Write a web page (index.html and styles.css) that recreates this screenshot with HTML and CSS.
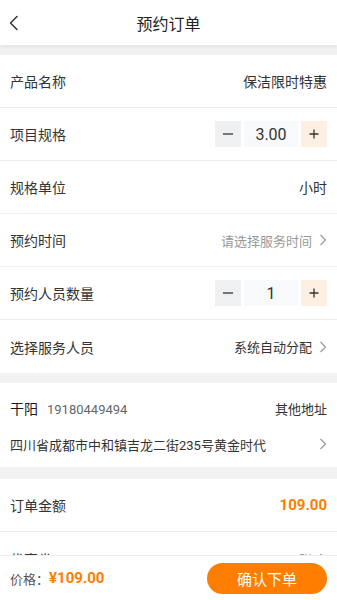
FILE: index.html
```html
<!DOCTYPE html>
<html lang="zh">
<head>
<meta charset="utf-8">
<link rel="stylesheet" href="styles.css">
</head>
<body>
<div class="page">
  <header class="topbar">
    <svg class="back" width="12" height="16" viewBox="0 0 12 16"><path d="M9 1.5 L2.5 8 L9 14.5" fill="none" stroke="#333" stroke-width="1.5" stroke-linecap="round" stroke-linejoin="round"/></svg>
    <h1 class="title">预约订单</h1>
  </header>

  <section class="card">
    <div class="row"><span class="label">产品名称</span><span class="value">保洁限时特惠</span></div>
    <div class="row"><span class="label">项目规格</span>
      <div class="stepper">
        <span class="btn minus"><svg width="12" height="12" viewBox="0 0 12 12"><path d="M1 6 H11" stroke="#333" stroke-width="1.3"/></svg></span>
        <span class="num">3.00</span>
        <span class="btn plus"><svg width="12" height="12" viewBox="0 0 12 12"><path d="M1.5 6 H10.5 M6 1.5 V10.5" stroke="#333" stroke-width="1.3"/></svg></span>
      </div>
    </div>
    <div class="row"><span class="label">规格单位</span><span class="value">小时</span></div>
    <div class="row"><span class="label">预约时间</span><span class="value small muted">请选择服务时间<svg class="chev" width="8" height="12" viewBox="0 0 8 12"><path d="M1.5 1 L6.5 6 L1.5 11" fill="none" stroke="#9a9a9a" stroke-width="1.2"/></svg></span></div>
    <div class="row"><span class="label">预约人员数量</span>
      <div class="stepper">
        <span class="btn minus"><svg width="12" height="12" viewBox="0 0 12 12"><path d="M1 6 H11" stroke="#333" stroke-width="1.3"/></svg></span>
        <span class="num">1</span>
        <span class="btn plus"><svg width="12" height="12" viewBox="0 0 12 12"><path d="M1.5 6 H10.5 M6 1.5 V10.5" stroke="#333" stroke-width="1.3"/></svg></span>
      </div>
    </div>
    <div class="row"><span class="label">选择服务人员</span><span class="value small">系统自动分配<svg class="chev" width="8" height="12" viewBox="0 0 8 12"><path d="M1.5 1 L6.5 6 L1.5 11" fill="none" stroke="#9a9a9a" stroke-width="1.2"/></svg></span></div>
  </section>

  <section class="card address">
    <div class="addr-top">
      <span class="who"><span class="name">干阳</span><span class="phone">19180449494</span></span>
      <span class="value small">其他地址</span>
    </div>
    <div class="addr-line">
      <span class="addr">四川省成都市中和镇吉龙二街235号黄金时代</span>
      <svg class="chev" width="8" height="12" viewBox="0 0 8 12"><path d="M1.5 1 L6.5 6 L1.5 11" fill="none" stroke="#9a9a9a" stroke-width="1.2"/></svg>
    </div>
  </section>

  <section class="card">
    <div class="row"><span class="label">订单金额</span><span class="value amount">109.00</span></div>
    <div class="row"><span class="label">优惠卷</span><span class="value small muted">-0张<svg class="chev" width="8" height="12" viewBox="0 0 8 12"><path d="M1.5 1 L6.5 6 L1.5 11" fill="none" stroke="#9a9a9a" stroke-width="1.2"/></svg></span></div>
  </section>
</div>

<footer class="bottombar">
  <div class="price"><span class="price-label">价格：</span><span class="price-num">¥109.00</span></div>
  <button class="submit">确认下单</button>
</footer>
</body>
</html>
```

FILE: styles.css
```css
* { box-sizing: border-box; margin: 0; padding: 0; }
html, body { background: #f2f2f2; }
body {
  font-family: Roboto, "Noto Sans CJK SC", sans-serif;
  color: #333;
  font-size: 14px;
  width: 337px;
  height: 600px;
  overflow: hidden;
}
.page { display: flex; flex-direction: column; }
.topbar {
  height: 45px;
  background: #fff;
  display: flex;
  align-items: center;
  justify-content: center;
  position: relative;
  margin-bottom: 10px;
  box-shadow: 0 2px 4px rgba(0,0,0,0.06);
}
.back { position: absolute; left: 8px; top: 15px; }
.title { font-size: 16px; font-weight: normal; color: #222; }
.card { background: #fff; margin-bottom: 10px; }
.row {
  height: 53px;
  padding: 0 10px;
  display: flex;
  align-items: center;
  justify-content: space-between;
  border-bottom: 1px solid #eeeeee;
}
.row:last-child { border-bottom: none; }
.label { font-size: 14px; color: #333; }
.value { font-size: 14px; color: #333; display: flex; align-items: center; }
.value.small { font-size: 13px; }
.value.muted { color: #999; }
.chev { margin-left: 7px; margin-right: 0; }
.stepper { display: flex; gap: 3px; align-items: center; }
.btn, .num {
  height: 26px;
  display: flex;
  align-items: center;
  justify-content: center;
}
.btn { width: 26px; }
.minus { background: #eef0f2; }
.plus { background: #fdf0e3; }
.num { width: 54px; background: #f8f9fa; font-size: 16px; color: #333; }
.address { padding: 14px 10px 12px; margin-bottom: 12px; }
.addr-top, .addr-line {
  height: 22px;
  display: flex;
  align-items: center;
  justify-content: space-between;
}
.addr-line { margin-top: 14px; }
.who { display: flex; align-items: baseline; }
.name { font-size: 14px; color: #1a1a1a; }
.phone { font-size: 13px; color: #666; margin-left: 9px; }
.addr { font-size: 13px; color: #333; }
.amount { color: #ff7d00; font-weight: bold; font-size: 15px; }
.bottombar {
  position: fixed;
  left: 0; right: 0; bottom: 0;
  height: 45px;
  background: #fff;
  border-top: 1px solid #eee;
  display: flex;
  align-items: center;
  justify-content: space-between;
  padding: 0 10px;
}
.price { font-size: 13px; color: #555; display: flex; align-items: center; }
.price-num { color: #ff7d00; font-weight: bold; font-size: 15px; }
.submit {
  width: 120px;
  height: 31px;
  border: none;
  border-radius: 16px;
  background: #ff7d00;
  color: #fff;
  font-family: Roboto, "Noto Sans CJK SC", sans-serif;
  font-size: 15px;
}
```
